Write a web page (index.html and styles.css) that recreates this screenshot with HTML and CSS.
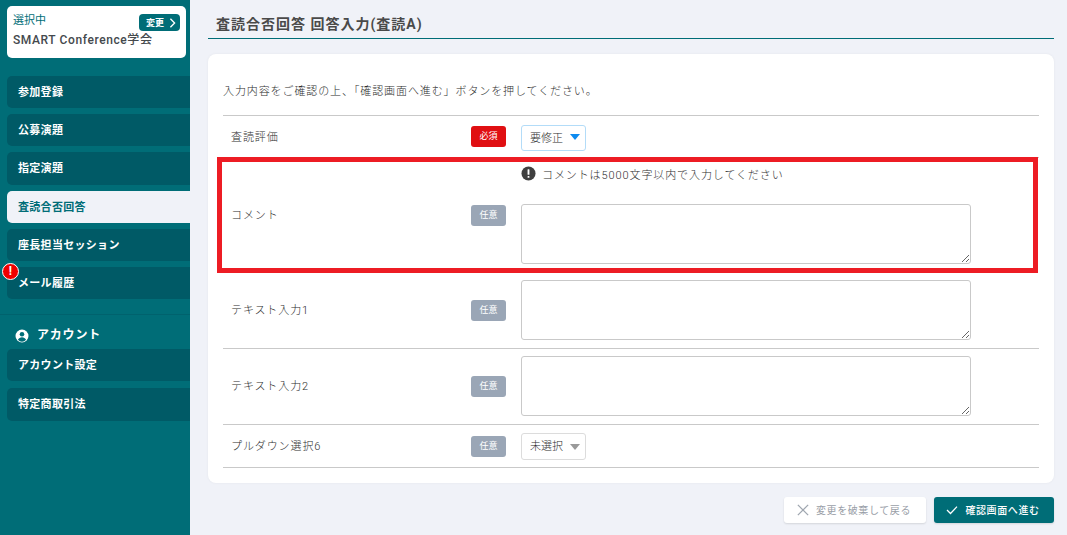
FILE: index.html
```html
<!DOCTYPE html>
<html lang="ja">
<head>
<meta charset="utf-8">
<title>査読合否回答 回答入力</title>
<link rel="stylesheet" href="styles.css">
</head>
<body>
<div class="app">
  <aside class="sidebar">
    <div class="org">
      <div class="org-top">
        <span class="org-label">選択中</span>
        <span class="org-change">変更
          <svg class="chev" viewBox="0 0 8 12" width="7" height="10"><path d="M1.5 1l5 5-5 5" fill="none" stroke="#fff" stroke-width="1.6"/></svg>
        </span>
      </div>
      <div class="org-name">SMART Conference学会</div>
    </div>
    <nav class="menu">
      <a class="item">参加登録</a>
      <a class="item">公募演題</a>
      <a class="item">指定演題</a>
      <a class="item active">査読合否回答</a>
      <a class="item">座長担当セッション</a>
      <a class="item alert-item"><span class="alert">!</span>メール履歴</a>
    </nav>
    <div class="account">
      <div class="account-head">
        <svg viewBox="0 0 16 16" width="14" height="14"><circle cx="8" cy="8" r="7.4" fill="#fff"/><circle cx="8" cy="6" r="2.6" fill="#006d77"/><path d="M3.4 12.4c.8-2 2.6-3 4.6-3s3.8 1 4.6 3a6 6 0 0 1-9.2 0z" fill="#006d77"/></svg>
        <span>アカウント</span>
      </div>
      <nav class="menu">
        <a class="item">アカウント設定</a>
        <a class="item">特定商取引法</a>
      </nav>
    </div>
  </aside>
  <main class="main">
    <h1 class="title">査読合否回答 回答入力(査読A)</h1>
    <section class="card">
      <p class="intro">入力内容をご確認の上、「確認画面へ進む」ボタンを押してください。</p>
      <div class="row row-select">
        <div class="label">査読評価</div>
        <span class="badge req">必須</span>
        <div class="field"><div class="select focus">要修正<span class="tri blue"></span></div></div>
      </div>
      <div class="row row-comment">
        <div class="highlight"></div>
        <div class="label">コメント</div>
        <span class="badge opt">任意</span>
        <div class="field">
          <div class="notice">
            <svg viewBox="0 0 16 16" width="15" height="15"><circle cx="8" cy="8" r="7.5" fill="#3f3f3f"/><rect x="7" y="3.4" width="2" height="6" rx=".6" fill="#fff"/><rect x="7" y="10.6" width="2" height="2" rx=".6" fill="#fff"/></svg>
            <span>コメントは5000文字以内で入力してください</span>
          </div>
          <textarea class="area"></textarea>
        </div>
      </div>
      <div class="row row-text">
        <div class="label">テキスト入力1</div>
        <span class="badge opt">任意</span>
        <div class="field"><textarea class="area"></textarea></div>
      </div>
      <div class="row row-text">
        <div class="label">テキスト入力2</div>
        <span class="badge opt">任意</span>
        <div class="field"><textarea class="area"></textarea></div>
      </div>
      <div class="row row-select last">
        <div class="label">プルダウン選択6</div>
        <span class="badge opt">任意</span>
        <div class="field"><div class="select">未選択<span class="tri grey"></span></div></div>
      </div>
    </section>
    <div class="actions">
      <button class="btn ghost" type="button">
        <svg viewBox="0 0 14 14" width="12" height="12"><path d="M1 1l12 12M13 1L1 13" stroke="#a0a7b0" stroke-width="1.5" fill="none"/></svg>
        変更を破棄して戻る
      </button>
      <button class="btn primary" type="button">
        <svg viewBox="0 0 14 12" width="12" height="10"><path d="M1 6l4.2 4.2L13 2" stroke="#fff" stroke-width="1.5" fill="none"/></svg>
        確認画面へ進む
      </button>
    </div>
  </main>
</div>
</body>
</html>
```
FILE: styles.css
```css
* { box-sizing: border-box; }
html, body { margin: 0; height: 100%; }
body {
  font-family: Roboto, "Noto Sans CJK JP", sans-serif;
  background: #f0f2f8;
  color: #4a4a4a;
  overflow: hidden;
}
.app { display: flex; height: 535px; }
.sidebar {
  width: 190px;
  flex: none;
  background: #006d77;
  padding: 6px 0 0 7px;
}
.org {
  width: 179px;
  height: 52px;
  margin-bottom: 18px;
  background: #fff;
  border-radius: 5px;
  padding: 7px 6px 0 6px;
}
.org-top { display: flex; justify-content: space-between; align-items: flex-start; height: 16px; }
.org-label { font-size: 11px; line-height: 14px; margin-top: 1px; color: #006d77; }
.org-change {
  display: flex;
  align-items: center;
  gap: 5px;
  margin-top: 1px;
  height: 17px;
  width: 41px;
  padding-left: 7px;
  background: #006d77;
  border-radius: 4px;
  color: #fff;
  font-size: 9px;
  font-weight: 700;
}
.org-name { font-size: 12px; line-height: 16px; font-weight: 500; letter-spacing: .6px; color: #44494d; margin-top: 3px; }
.menu { display: flex; flex-direction: column; gap: 6px; }
.item {
  position: relative;
  display: flex;
  align-items: center;
  height: 32.2px;
  padding: 0 0 2px 11px;
  background: #005a66;
  border-radius: 5px 0 0 5px;
  color: #fff;
  font-size: 11px;
  font-weight: 700;
  letter-spacing: .3px;
}
.item.active { background: #f0f2f8; color: #006d77; }
.alert {
  position: absolute;
  left: -5px;
  top: -4px;
  width: 17px;
  height: 17px;
  border-radius: 50%;
  background: #f00000;
  border: 1px solid #fff;
  color: #fff;
  font-size: 12px;
  font-weight: 700;
  line-height: 15px;
  text-align: center;
}
.account {
  margin: 15px 0 0 -7px;
  padding: 11px 0 0 7px;
  border-top: 1px solid #00626d;
}
.account .menu { gap: 7px; }
.account-head {
  display: flex;
  align-items: flex-start;
  gap: 8px;
  height: 23px;
  padding-left: 8px;
  color: #fff;
  font-size: 12px;
  font-weight: 700;
  letter-spacing: .8px;
}
.account-head svg { margin-top: 3px; }
.account-head span { line-height: 17px; margin-top: 1px; }
.main { flex: 1; padding: 0 13px 0 18px; display: flex; flex-direction: column; }
.title {
  margin: 0 0 15px;
  height: 39px;
  padding: 14px 0 0 8px;
  border-bottom: 1px solid #006d77;
  font-size: 14px;
  line-height: 20px;
  font-weight: 700;
  letter-spacing: 1px;
  color: #4a4a4a;
}
.card {
  height: 429px;
  background: #fff;
  border-radius: 8px;
  padding: 0 15px;
  box-shadow: 0 0 3px rgba(0,0,0,.05);
}
.intro {
  margin: 0;
  height: 62px;
  padding-top: 29px;
  font-size: 11px;
  font-weight: 300;
  line-height: 17px;
  letter-spacing: .9px;
  border-bottom: 1px solid #c9c9c9;
  color: #2e2e2e;
}
.row {
  position: relative;
  display: flex;
  align-items: center;
  border-bottom: 1px solid #c9c9c9;
}
.row-select { height: 42px; }
.row-select.last { height: 43px; }
.row-comment { height: 114px; border-bottom: 0; }
.row-comment .field { margin-top: -1px; }
.row-text { height: 76px; padding-bottom: 1px; }
.row-text .label { padding-bottom: 3px; }
.row-comment + .row-text { height: 77px; padding-bottom: 0; }
.label { width: 248px; padding: 0 0 2px 8px; font-size: 11px; font-weight: 300; letter-spacing: .9px; color: #2e2e2e; }
.badge {
  flex: none;
  width: 35px;
  height: 21px;
  margin-right: 15px;
  border-radius: 3px;
  color: #fff;
  font-size: 9px;
  line-height: 21px;
  text-align: center;
}
.req { background: #e00f12; }
.opt { background: #9aa6b6; }
.field { display: flex; flex-direction: column; }
.select {
  position: relative;
  width: 65px;
  height: 27px;
  padding-left: 8px;
  background: #fff;
  border: 1px solid #dcdcdc;
  border-radius: 3px;
  font-size: 11px;
  font-weight: 300;
  line-height: 25px;
  color: #2e2e2e;
}
.select.focus { border: 1.5px solid #b3dcf8; margin-top: 2px; height: 26px; }
.tri {
  position: absolute;
  right: 5px;
  top: 10px;
  border-left: 5px solid transparent;
  border-right: 5px solid transparent;
  border-top: 6.5px solid #9a9a9a;
}
.tri.blue { border-top-color: #0d8bf0; top: 8.5px; }
.notice {
  display: flex;
  align-items: center;
  gap: 6px;
  height: 17px;
  margin-bottom: 22px;
  font-size: 11px;
  font-weight: 300;
  letter-spacing: .9px;
  color: #2e2e2e;
}
.area {
  display: block;
  width: 450px;
  height: 60px;
  border: 1px solid #c9c9c9;
  border-radius: 3px;
  background: #fff;
  padding: 4px;
}
.highlight {
  position: absolute;
  left: -6px;
  top: -1px;
  width: 821px;
  height: 116px;
  border: 5px solid #ed1c24;
  pointer-events: none;
}
.actions { display: flex; justify-content: flex-end; gap: 8px; margin-top: 14px; }
.btn {
  display: flex;
  align-items: center;
  justify-content: center;
  gap: 7px;
  height: 26px;
  border: 0;
  border-radius: 3px;
  font-family: inherit;
  font-size: 10px;
  letter-spacing: .6px;
  padding: 0 2px 1px 0;
  box-shadow: 0 1px 2px rgba(0,0,0,.12);
}
.ghost { width: 142px; background: #fff; color: #9aa0a8; }
.primary { width: 120px; background: #006d77; color: #fff; font-weight: 500; }
```
